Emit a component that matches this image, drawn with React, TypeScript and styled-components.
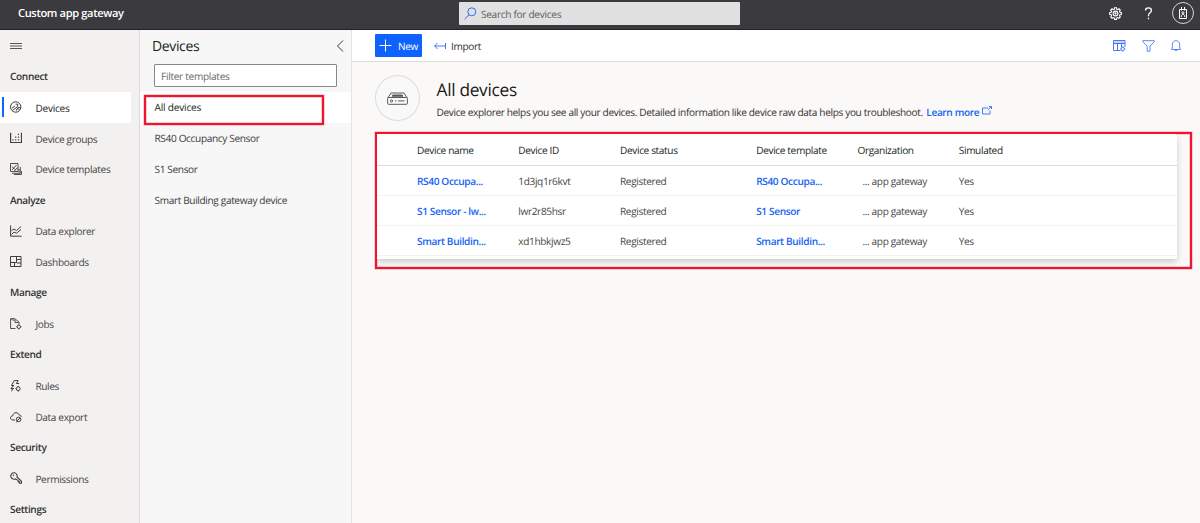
import React from 'react';
import styled, { createGlobalStyle, css } from 'styled-components';

const GlobalStyle = createGlobalStyle`
  * { box-sizing: border-box; }
  body {
    margin: 0;
    font-family: 'Open Sans', 'Noto Sans', sans-serif;
    font-size: 10.1px;
    letter-spacing: -0.36px;
    text-rendering: geometricPrecision;
    color: #323130;
    background: #faf9f8;
    overflow: hidden;
  }
  svg { display: block; flex: none; fill: none; stroke: currentColor; }
`;

const Page = styled.div`
  display: flex;
  flex-direction: column;
  width: 1200px;
  height: 523px;
  overflow: hidden;
  white-space: nowrap;
`;

const TopBar = styled.header`
  display: flex;
  align-items: center;
  height: 30px;
  flex: none;
  padding: 0 6px 3px 18px;
  background: #3b3a3f;
  border-bottom: 1px solid #242328;
  color: #fff;
`;

const Brand = styled.div`
  width: 440.5px;
  padding-top: 1px;
  font-size: 11.1px;
  font-weight: 600;
`;

const Search = styled.div`
  display: flex;
  align-items: center;
  width: 281.5px;
  height: 23px;
  padding-left: 5px;
  gap: 4.5px;
  margin-top: 1px;
  background: #e1e1e1;
  border-radius: 1px;
  color: #5f5e5c;
  letter-spacing: -0.3px;
  svg { color: #2f6bf5; }
`;

const TopActions = styled.div`
  display: flex;
  align-items: center;
  margin-left: auto;
`;

const HelpIcon = styled.div`
  margin: 0 19px 0 22px;
`;

const Avatar = styled.div`
  display: grid;
  place-items: center;
  width: 22px;
  height: 22px;
  border: 1px solid #d6d6d6;
  border-radius: 50%;
`;

const Body = styled.div`
  display: flex;
  flex: 1;
  min-height: 0;
`;

const Sidebar = styled.nav`
  width: 140px;
  flex: none;
  overflow: hidden;
  background: #f2f1f0;
  border-right: 1px solid #dcdcde;
`;

const MenuToggle = styled.div`
  height: 31px;
  padding: 12px 0 0 10px;
  color: #55544f;
`;

const SectionTitle = styled.div`
  height: 30.93px;
  padding-left: 10px;
  line-height: 31.4px;
  font-weight: 600;
`;

const NavItem = styled.div<{ $active?: boolean }>`
  position: relative;
  display: flex;
  align-items: center;
  height: 30.93px;
  width: 131px;
  padding-left: 10px;
  gap: 13.4px;
  color: #484644;
  svg { color: #3f3e3d; }
  ${p => p.$active && css`
    background: #fff;
    color: #252423;
    font-weight: 500;
    letter-spacing: -0.25px;
    &::before {
      content: '';
      position: absolute;
      left: 2px;
      top: 5.5px;
      width: 2px;
      height: 20px;
      background: #0f62fe;
    }
  `}
`;

const NavLabel = styled.span`
  padding-top: 0.4px;
`;

const TemplatePanel = styled.aside`
  width: 212px;
  flex: none;
  background: #f7f7f7;
  border-right: 1px solid #e4e4e4;
`;

const PanelHeader = styled.div`
  display: flex;
  align-items: center;
  justify-content: space-between;
  height: 31px;
  padding: 1px 7px 0 12px;
  font-size: 14px;
  font-weight: 500;
  color: #201f1e;
`;

const FilterBox = styled.div`
  display: flex;
  align-items: center;
  width: 183px;
  height: 23px;
  margin: 2.5px 0 5.5px 14px;
  padding: 1px 0 0 6px;
  background: #fff;
  border: 1px solid #8a8886;
  border-radius: 1px;
  color: #6b6967;
  letter-spacing: -0.3px;
`;

const TemplateRow = styled.div<{ $active?: boolean }>`
  position: relative;
  height: 30.93px;
  padding-left: 14.5px;
  line-height: 31.4px;
  color: ${p => (p.$active ? '#201f1e' : '#3b3a39')};
  font-weight: ${p => (p.$active ? 500 : 400)};
  letter-spacing: ${p => (p.$active ? '-0.2px' : '-0.36px')};
  background: ${p => (p.$active ? '#fff' : 'transparent')};
`;

const RowHighlight = styled.div`
  position: absolute;
  left: 4px;
  top: 2.5px;
  width: 180px;
  height: 30px;
  border: 2px solid #f0142f;
  box-shadow: 0 0 0 0.5px #f7a0aa, inset 0 0 0 0.5px #f7a0aa;
`;

const Main = styled.main`
  flex: 1;
  min-width: 0;
  display: flex;
  flex-direction: column;
`;

const Toolbar = styled.div`
  display: flex;
  align-items: center;
  height: 32px;
  flex: none;
  padding: 0 18px 0 23px;
  background: #fff;
  border-bottom: 1px solid #dcdcde;
`;

const NewButton = styled.div`
  display: flex;
  align-items: center;
  justify-content: center;
  gap: 6px;
  width: 47px;
  height: 23px;
  background: #0f62fe;
  color: #fff;
  font-weight: 500;
  border-radius: 1px;
`;

const ImportButton = styled.div`
  display: flex;
  align-items: center;
  gap: 5px;
  margin-left: 12px;
  svg { color: #2f6bf5; }
`;

const ToolbarIcons = styled.div`
  display: flex;
  align-items: center;
  gap: 15.5px;
  margin-left: auto;
  color: #4a76f7;
`;

const Hero = styled.section`
  display: flex;
  align-items: flex-start;
  padding: 13px 0 0 23px;
  gap: 16.5px;
`;

const HeroIcon = styled.div`
  display: grid;
  place-items: center;
  width: 45px;
  height: 46px;
  border: 1px solid #dcdcdc;
  border-radius: 50%;
  background: #f9f9f9;
  color: #5c5b5a;
`;

const HeroTitle = styled.h1`
  margin: 3px 0 0;
  font-size: 17.3px;
  font-weight: 500;
  letter-spacing: -0.3px;
  line-height: 26px;
  color: #1b1a19;
`;

const HeroText = styled.div`
  display: flex;
  align-items: center;
  line-height: 16px;
  svg { margin: -3px 0 0 3px; color: #2f6bf5; }
`;

const Link = styled.span`
  color: #1464f6;
  font-weight: 600;
`;

const LearnMore = styled(Link)`
  margin-left: 3.5px;
`;

const TableFrame = styled.section`
  width: 817px;
  height: 137px;
  margin: 11px 0 0 23px;
  border: 2px solid #f0142f;
  box-shadow: 0 0 0 0.5px #f7a0aa, inset 0 0 0 0.5px #f7a0aa;
  overflow: hidden;
`;

const Table = styled.div`
  width: 800px;
  height: 125px;
  background: #fff;
  border-radius: 0 2px 2px 0;
  box-shadow: 0 3px 6px rgba(0, 0, 0, 0.18);
`;

const TableRow = styled.div<{ $head?: boolean }>`
  display: grid;
  grid-template-columns: 101.3px 101.7px 136.2px 101.3px 101.3px 1fr;
  align-items: center;
  height: ${p => (p.$head ? 31.5 : 30)}px;
  padding: 1px 0 0 40px;
  border-bottom: 1px solid ${p => (p.$head ? '#dddcdb' : '#f3f2f1')};
  color: ${p => (p.$head ? '#201f1e' : '#484644')};
  font-weight: ${p => (p.$head ? 500 : 400)};
`;

const OrgCell = styled.span`
  padding-left: 5px;
`;

const GearIcon = () => (
  <svg width="13" height="13" viewBox="0 0 13 13" strokeWidth="1.1">
    <path d="M5.5 .8h2l.3 1.5.9.4 1.3-.9 1.3 1.3-.8 1.3.4.9 1.5.3v1.9l-1.5.3-.4.9.8 1.3-1.3 1.3-1.3-.8-.9.4-.3 1.5h-2l-.3-1.5-.9-.4-1.3.8-1.3-1.3.9-1.3-.4-.9L.7 7.5V5.6l1.5-.3.4-.9-.9-1.3L3 1.8l1.3.9.9-.4z" />
    <circle cx="6.5" cy="6.5" r="2.4" /><circle cx="6.5" cy="6.5" r=".6" />
  </svg>
);

const QuestionIcon = () => (
  <svg width="9" height="13" viewBox="0 0 9 13" strokeWidth="1.3">
    <path d="M1.5 3.4C1.5 1.8 2.7 .8 4.4.8s3 1 3 2.6c0 2.2-2.9 2.6-2.9 4.9v.9M4.5 10.8v1.4" />
  </svg>
);

const BadgeIcon = () => (
  <svg width="10" height="14" viewBox="0 0 10 14" strokeWidth="1">
    <path d="M1.5 3.5h7v9h-7zM3.5 1v3.5M6.5 1v3.5" />
    <circle cx="5" cy="6.8" r="1" /><path d="M3.3 11v-1c0-.8.7-1.5 1.7-1.5s1.7.7 1.7 1.5v1" />
  </svg>
);

const SearchIcon = () => (
  <svg width="13" height="13" viewBox="0 0 13 13" strokeWidth="1">
    <circle cx="7.8" cy="4.8" r="4" /><path d="M5 7.8L.6 12.2" />
  </svg>
);

const icons: Record<string, React.ReactNode> = {
  devices: <><circle cx="5.7" cy="6" r="5.2" /><path d="M5.5 3.2h2.2v2.2L3.8 8.5M2 7.2L5 5M3.8 8.5L2.5 9.5M7.2 7.2l1.8-.8 1.6.6M6.2 9.8l1-2.2 2.2.8" /></>,
  groups: <path d="M.6.8v9.7h10.9V.8M3 8.5V7.2M5.7 8.5V7.2M8.5 8.5V7.2M5.7 5.7V4.4M8.5 5.7V4.4M8.5 3V1.7" strokeWidth="1.2" />,
  templates: <path d="M.5.5h7.5v8H.5zM2 10.3h8.3V4M4 11.5h7.5V8M2 7l4.5-5M2 3.5L5.5 7M4.5 8l3-3.5M9 6v3.5" strokeWidth=".9" />,
  explorer: <path d="M.6.3v10.9h11M1.5 5.5L4 4l2.5 1.500 4.500-4M1.500 9.500L4 7l2.500 1.200L11 4.500" />,
  dashboards: <path d="M.5.5h10.500v10H.5zM.5 6.500h6.500M6.500.500v6M4.500 6.500v4M6.500 3.500H11M7 7h4" />,
  jobs: <><path d="M5.500 10.500H.6V.6h4l4.500 3.500v2M2.500 2h2.500v2.500h3.500M2 .6v1.500" strokeWidth=".9" /><circle cx="8.800" cy="8.800" r="1.700" /><path d="M8.800 6.200v1M8.800 10.500v1M6.300 8.800h.8M10.500 8.800h.9" strokeWidth=".7" /></>,
  rules: <><path d="M4.200.6h4L6.300 3.500h2.900M4.200.6L1.500 5.500h2.500L.7 8.500M1 8.500h3M2.500 8.500l-.8 2.800" /><circle cx="8.200" cy="8.700" r="1.900" /><path d="M8.200 5.800v1M8.200 10.600v1M5.500 8.700h.8" /></>,
  exports: <><path d="M5 9H2.800C1.500 9 .5 8.100.5 6.900s1-2.100 2.300-2.100C3 2.900 4.300 1.700 6 1.700c1.500 0 2.600.8 3 2.200 1.300 0 2.200.9 2.200 2" /><circle cx="8.600" cy="8.400" r="2.300" /><path d="M7 9.700l3-2.500M6.300 11l1.500-.5" /></>,
  permissions: <><path d="M5.300 6.900A3.200 3.200 0 1 1 7 5l4.500 4.300v1.900H9.600V9.900H8.200V8.600z" strokeWidth="1.100" /><circle cx="3.300" cy="3.300" r=".4" /></>,
};

const NavGlyph = ({ name }: { name: string }) => (
  <svg width="12" height="12" viewBox="0 0 12 12" strokeWidth="1">{icons[name]}</svg>
);

const nav: { title: string; items: [string, string][] }[] = [
  { title: 'Connect', items: [['devices', 'Devices'], ['groups', 'Device groups'], ['templates', 'Device templates']] },
  { title: 'Analyze', items: [['explorer', 'Data explorer'], ['dashboards', 'Dashboards']] },
  { title: 'Manage', items: [['jobs', 'Jobs']] },
  { title: 'Extend', items: [['rules', 'Rules'], ['exports', 'Data export']] },
  { title: 'Security', items: [['permissions', 'Permissions']] },
  { title: 'Settings', items: [] },
];

const templates = ['All devices', 'RS40 Occupancy Sensor', 'S1 Sensor', 'Smart Building gateway device'];
const columns = ['Device name', 'Device ID', 'Device status', 'Device template', 'Organization', 'Simulated'];
const devices = [
  ['RS40 Occupa...', '1d3jq1r6kvt', 'RS40 Occupa...'],
  ['S1 Sensor - lw...', 'lwr2r85hsr', 'S1 Sensor'],
  ['Smart Buildin...', 'xd1hbkjwz5', 'Smart Buildin...'],
];

export default function App() {
  return (
    <Page>
      <GlobalStyle />
      <TopBar>
        <Brand>Custom app gateway</Brand>
        <Search><SearchIcon />Search for devices</Search>
        <TopActions>
          <GearIcon />
          <HelpIcon><QuestionIcon /></HelpIcon>
          <Avatar><BadgeIcon /></Avatar>
        </TopActions>
      </TopBar>
      <Body>
        <Sidebar>
          <MenuToggle>
            <svg width="12" height="8" viewBox="0 0 12 8"><path d="M0 1.5h12M0 4h12M0 6.5h12" /></svg>
          </MenuToggle>
          {nav.map(group => (
            <React.Fragment key={group.title}>
              <SectionTitle>{group.title}</SectionTitle>
              {group.items.map(([icon, label]) => (
                <NavItem key={label} $active={label === 'Devices'}>
                  <NavGlyph name={icon} /><NavLabel>{label}</NavLabel>
                </NavItem>
              ))}
            </React.Fragment>
          ))}
        </Sidebar>
        <TemplatePanel>
          <PanelHeader>
            Devices
            <svg width="8" height="12" viewBox="0 0 8 12"><path d="M7 .5L1.5 6 7 11.5" strokeWidth=".9" /></svg>
          </PanelHeader>
          <FilterBox>Filter templates</FilterBox>
          {templates.map((name, i) => (
            <TemplateRow key={name} $active={i === 0}>
              {name}
              {i === 0 && <RowHighlight />}
            </TemplateRow>
          ))}
        </TemplatePanel>
        <Main>
          <Toolbar>
            <NewButton>
              <svg width="13" height="13" viewBox="0 0 13 13"><path d="M6.5.5v12M.5 6.5h12" /></svg>
              New
            </NewButton>
            <ImportButton>
              <svg width="12" height="8" viewBox="0 0 12 8"><path d="M11.5 1v6M.5 4h11M3.5 1L.7 4l2.8 3" strokeWidth=".9" /></svg>
              Import
            </ImportButton>
            <ToolbarIcons>
              <svg width="13" height="12" viewBox="0 0 13 12">
                <path d="M7.500 10.500H.5V.5h11.500V7M.5 3.500h11.500M4.500 3.500v7M8.500 3.500V7" />
                <path d="M.5 2h11.500" strokeWidth="2" strokeOpacity=".3" />
                <circle cx="9.700" cy="8.900" r="1.700" /><path d="M9.700 6.400v.8M9.700 10.600v1M7.300 8.900h.7M11.400 8.900h.9" />
              </svg>
              <svg width="13" height="12" viewBox="0 0 13 12" strokeWidth=".9"><path d="M.7.7h11.600v1L8 6.200v5H5.200v-5L.7 1.700z" /></svg>
              <svg width="12" height="12" viewBox="0 0 12 12" strokeWidth=".9">
                <path d="M1.500 9.500h9L9.700 8V4.500C9.700 2.300 8.100.700 6 .700S2.300 2.300 2.300 4.500V8zM5 9.700c0 .8.400 1.300 1 1.300s1-.5 1-1.300" />
              </svg>
            </ToolbarIcons>
          </Toolbar>
          <Hero>
            <HeroIcon>
              <svg width="21" height="13" viewBox="0 0 21 13">
                <rect x=".6" y="5.5" width="19.8" height="6.8" rx="1" />
                <path d="M.8 6L4 1h13l3.200 5" />
                <path d="M5.8 3h9.400l.8 1.200H5z" fill="currentColor" />
                <circle cx="4.5" cy="8.9" r="1.1" /><path d="M8 8.900h1.500M11 8.900h6.500" />
              </svg>
            </HeroIcon>
            <div>
              <HeroTitle>All devices</HeroTitle>
              <HeroText>
                Device explorer helps you see all your devices. Detailed information like device raw data helps you troubleshoot.
                <LearnMore>Learn more</LearnMore>
                <svg width="10" height="9" viewBox="0 0 10 9"><path d="M6 2H.5v6H8V4.500M5.800 4L9.300.7M7 .6h2.500V3" strokeWidth=".9" /></svg>
              </HeroText>
            </div>
          </Hero>
          <TableFrame>
            <Table>
              <TableRow $head>{columns.map(c => <span key={c}>{c}</span>)}</TableRow>
              {devices.map(([name, id, template]) => (
                <TableRow key={id}>
                  <Link>{name}</Link>
                  <span>{id}</span>
                  <span>Registered</span>
                  <Link>{template}</Link>
                  <OrgCell>... app gateway</OrgCell>
                  <span>Yes</span>
                </TableRow>
              ))}
            </Table>
          </TableFrame>
        </Main>
      </Body>
    </Page>
  );
}
